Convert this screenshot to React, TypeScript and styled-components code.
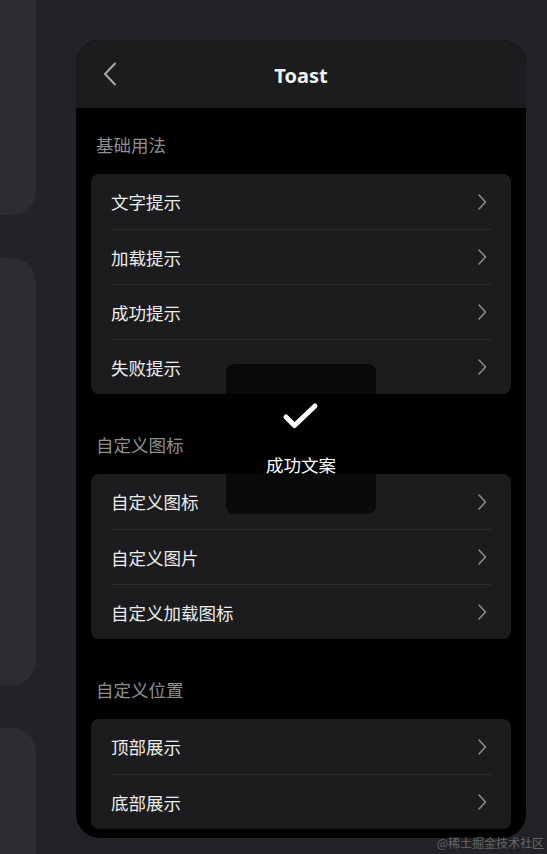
import React from 'react'
import styled, { createGlobalStyle } from 'styled-components'

const GlobalStyle = createGlobalStyle`
  html, body {
    margin: 0;
    padding: 0;
    background: #222327;
    font-family: "Noto Sans", "Noto Sans CJK SC", sans-serif;
  }
`

const Page = styled.div`
  position: relative;
  display: flex;
  align-items: flex-start;
  width: 547px;
  height: 854px;
  overflow: hidden;
`

const SideColumn = styled.div`
  display: flex;
  flex-direction: column;
  gap: 43px;
  width: 36px;
  margin-top: -40px;
`

const SideBlock = styled.div<{ $h: number }>`
  height: ${({ $h }) => $h}px;
  background: #2c2d30;
  border-radius: 0 24px 24px 0;
`

const Phone = styled.div`
  position: relative;
  margin: 40px 0 0 40px;
  width: 450px;
  height: 798px;
  background: #000;
  border-radius: 24px;
  overflow: hidden;
`

const NavBar = styled.div`
  position: relative;
  display: flex;
  align-items: center;
  justify-content: center;
  height: 68px;
  background: #1c1c1e;
`

const BackButton = styled.div`
  position: absolute;
  left: 26px;
  top: 22px;
  display: flex;
`

const NavTitle = styled.div`
  color: #f2f2f2;
  font-size: 20px;
  font-weight: 700;
  margin-top: 2px;
`

const Content = styled.div`
  padding: 0 15px;
`

const SectionTitle = styled.div`
  display: flex;
  align-items: center;
  height: 66px;
  padding: 6px 5px 0;
  color: #8e8e90;
  font-size: 17.5px;
  box-sizing: border-box;
`

const Card = styled.div`
  background: #1c1c1e;
  border-radius: 8px;
  padding: 0 20px;
  margin-bottom: 14px;
`

const Row = styled.div`
  display: flex;
  align-items: center;
  justify-content: space-between;
  height: 55px;
  color: #ececec;
  font-size: 17.5px;
  & + & {
    border-top: 1px solid #2c2c2e;
    height: 54px;
  }
  & > svg {
    margin-right: 3px;
  }
`

const Toast = styled.div`
  position: absolute;
  left: 150px;
  top: 324px;
  width: 150px;
  height: 150px;
  border-radius: 8px;
  background: rgba(0, 0, 0, 0.62);
  display: flex;
  flex-direction: column;
  align-items: center;
  justify-content: center;
  gap: 20px;
  color: #fff;
  font-size: 17.5px;
`

const Watermark = styled.div`
  position: absolute;
  right: 3px;
  bottom: 3px;
  color: #66676b;
  font-size: 12px;
  font-family: "Noto Sans CJK SC", sans-serif;
`

const Chevron = () => (
  <svg width="12" height="18" viewBox="0 0 12 18" fill="none">
    <path d="M3 2l6.5 7L3 16" stroke="#8a8a8c" strokeWidth="1.6" strokeLinecap="round" strokeLinejoin="round" />
  </svg>
)

const BackIcon = () => (
  <svg width="16" height="24" viewBox="0 0 16 24" fill="none">
    <path d="M13 1.5L3 12l10 10.5" stroke="#a8a8aa" strokeWidth="2" strokeLinecap="round" strokeLinejoin="round" />
  </svg>
)

const CheckIcon = () => (
  <svg width="38" height="30" viewBox="0 0 38 30" fill="none">
    <path d="M4 15l8.5 8.5L33 4" stroke="#fff" strokeWidth="5" strokeLinecap="round" strokeLinejoin="round" />
  </svg>
)

const sections = [
  { title: '基础用法', items: ['文字提示', '加载提示', '成功提示', '失败提示'] },
  { title: '自定义图标', items: ['自定义图标', '自定义图片', '自定义加载图标'] },
  { title: '自定义位置', items: ['顶部展示', '底部展示'] },
]

const App = () => (
  <Page>
    <GlobalStyle />
    <SideColumn>
      <SideBlock $h={255} />
      <SideBlock $h={427} />
      <SideBlock $h={200} />
    </SideColumn>
    <Phone>
      <NavBar>
        <BackButton>
          <BackIcon />
        </BackButton>
        <NavTitle>Toast</NavTitle>
      </NavBar>
      <Content>
        {sections.map((s) => (
          <React.Fragment key={s.title}>
            <SectionTitle>{s.title}</SectionTitle>
            <Card>
              {s.items.map((item) => (
                <Row key={item}>
                  {item}
                  <Chevron />
                </Row>
              ))}
            </Card>
          </React.Fragment>
        ))}
      </Content>
      <Toast>
        <CheckIcon />
        成功文案
      </Toast>
    </Phone>
    <Watermark>@稀土掘金技术社区</Watermark>
  </Page>
)

export default App
